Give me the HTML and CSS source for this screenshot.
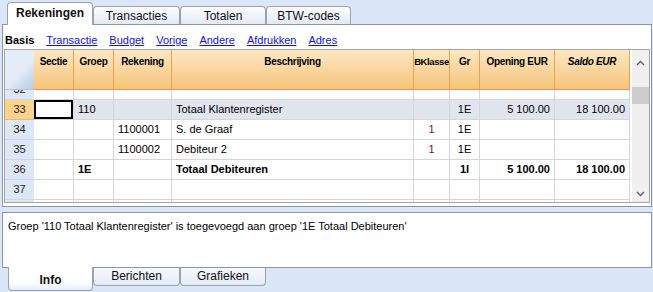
FILE: index.html
```html
<!doctype html>
<html lang="nl">

<head>
    <meta charset="utf-8" />
    <title>Rekeningen</title>
    <link rel="stylesheet" href="styles.css">
</head>

<body>
    <div class="top-tabs">
        <div class="tab active w86">Rekeningen</div>
        <div class="tab w87">Transacties</div>
        <div class="tab w86">Totalen</div>
        <div class="tab w85">BTW-codes</div>
    </div>

    <div class="main">
        <div class="links">
            <strong>Basis</strong>
            <a href="#">Transactie</a>
            <a href="#">Budget</a>
            <a href="#">Vorige</a>
            <a href="#">Andere</a>
            <a href="#">Afdrukken</a>
            <a href="#">Adres</a>
        </div>

        <div class="grid">
            <div class="sheet">
                <div class="row head">
                    <div class="cell num corner"></div>
                    <div class="cell">Sectie</div>
                    <div class="cell">Groep</div>
                    <div class="cell">Rekening</div>
                    <div class="cell">Beschrijving</div>
                    <div class="cell tight">BKlasse</div>
                    <div class="cell">Gr</div>
                    <div class="cell">Opening EUR</div>
                    <div class="cell italic">Saldo EUR</div>
                </div>

                <div class="body">
                    <div class="rows">
                        <div class="row">
                            <div class="cell num">32</div>
                            <div class="cell"></div><div class="cell"></div><div class="cell"></div><div class="cell"></div>
                            <div class="cell"></div><div class="cell"></div><div class="cell"></div><div class="cell"></div>
                        </div>
                        <div class="row current">
                            <div class="cell num">33</div>
                            <div class="cell selected"></div>
                            <div class="cell">110</div>
                            <div class="cell"></div>
                            <div class="cell">Totaal Klantenregister</div>
                            <div class="cell"></div>
                            <div class="cell mid">1E</div>
                            <div class="cell right">5 100.00</div>
                            <div class="cell right">18 100.00</div>
                        </div>
                        <div class="row">
                            <div class="cell num">34</div>
                            <div class="cell"></div>
                            <div class="cell"></div>
                            <div class="cell">1100001</div>
                            <div class="cell">S. de Graaf</div>
                            <div class="cell mid klasse">1</div>
                            <div class="cell mid">1E</div>
                            <div class="cell"></div>
                            <div class="cell"></div>
                        </div>
                        <div class="row">
                            <div class="cell num">35</div>
                            <div class="cell"></div>
                            <div class="cell"></div>
                            <div class="cell">1100002</div>
                            <div class="cell">Debiteur 2</div>
                            <div class="cell mid klasse">1</div>
                            <div class="cell mid">1E</div>
                            <div class="cell"></div>
                            <div class="cell"></div>
                        </div>
                        <div class="row total">
                            <div class="cell num">36</div>
                            <div class="cell"></div>
                            <div class="cell">1E</div>
                            <div class="cell"></div>
                            <div class="cell">Totaal Debiteuren</div>
                            <div class="cell"></div>
                            <div class="cell mid">1I</div>
                            <div class="cell right">5 100.00</div>
                            <div class="cell right">18 100.00</div>
                        </div>
                        <div class="row">
                            <div class="cell num">37</div>
                            <div class="cell"></div><div class="cell"></div><div class="cell"></div><div class="cell"></div>
                            <div class="cell"></div><div class="cell"></div><div class="cell"></div><div class="cell"></div>
                        </div>
                        <div class="row">
                            <div class="cell num"></div>
                            <div class="cell"></div><div class="cell"></div><div class="cell"></div><div class="cell"></div>
                            <div class="cell"></div><div class="cell"></div><div class="cell"></div><div class="cell"></div>
                        </div>
                    </div>
                </div>
            </div>

            <div class="scroll">
                <div class="arrow-up">
                    <svg width="9" height="6" viewBox="0 0 9 6"><polyline points="1,5 4.5,1.5 8,5" fill="none" stroke="#606060" stroke-width="1.4" /></svg>
                </div>
                <div class="thumb"></div>
                <div class="arrow-down">
                    <svg width="9" height="6" viewBox="0 0 9 6"><polyline points="1,1 4.5,4.5 8,1" fill="none" stroke="#606060" stroke-width="1.4" /></svg>
                </div>
            </div>
        </div>
    </div>

    <div class="info">Groep '110 Totaal Klantenregister' is toegevoegd aan groep '1E Totaal Debiteuren'</div>

    <div class="bottom-tabs">
        <div class="btab active w85">Info</div>
        <div class="btab w87">Berichten</div>
        <div class="btab w86">Grafieken</div>
    </div>
</body>

</html>
```

FILE: styles.css
```css
body {
    margin: 0;
    width: 653px;
    height: 292px;
    overflow: hidden;
    background-color: #dbe6f8;
    font-family: "Liberation Sans", Arial, sans-serif;
    font-size: 11px;
    color: #000;
}

/* tabs on top */

.top-tabs {
    display: flex;
    align-items: flex-end;
    height: 24px;
    padding-left: 7px;
}

.tab {
    box-sizing: border-box;
    height: 18px;
    border: 1px solid #9ba2ad;
    border-bottom: none;
    border-radius: 4px 4px 0 0;
    background: linear-gradient(#fdfeff, #e2e9f5);
    text-align: center;
    line-height: 18px;
    font-size: 12px;
    color: #111;
}

.tab.active {
    position: relative;
    z-index: 1;
    height: 23px;
    margin-bottom: -1px;
    background: #fff;
    font-weight: bold;
    line-height: 20px;
}

.w85 { width: 85px; }
.w86 { width: 86px; }
.w87 { width: 87px; }

/* main panel */

.main {
    box-sizing: border-box;
    width: 650px;
    height: 183px;
    margin-left: 2px;
    padding: 0 1px;
    border: 1px solid #8e959f;
    background-color: #fff;
}

.links {
    box-sizing: border-box;
    display: flex;
    align-items: center;
    gap: 12px;
    height: 24px;
    padding: 6px 0 0 1px;
}

.links a {
    color: #1010f0;
}

/* grid */

.grid {
    display: flex;
    height: 154px;
    box-sizing: border-box;
    border: 1px solid #a4a4a4;
}

.sheet {
    width: 625px;
}

.row {
    display: grid;
    grid-template-columns: 29px 40px 40px 58px 242px 36px 30px 75px 75px;
    height: 20px;
}

.cell {
    box-sizing: border-box;
    overflow: hidden;
    white-space: nowrap;
    padding: 0 4px;
    line-height: 19px;
    border-right: 1px solid #d6d6d6;
    border-bottom: 1px solid #d6d6d6;
}

.cell.num {
    padding: 0;
    text-align: center;
    color: #222;
    background-color: #dde7f5;
    border-right: none;
    border-bottom-color: #cbd8ea;
}

.cell.mid { text-align: center; }
.cell.right { text-align: right; }
.cell.klasse { color: #7a0a55; }

.head {
    height: 40px;
}

.head .cell {
    padding: 5px 2px 0;
    line-height: 13px;
    text-align: center;
    font-size: 10px;
    font-weight: bold;
    letter-spacing: -0.3px;
    background: linear-gradient(#fde8c4, #f6c47a);
    border-right-color: #f0a04a;
    border-bottom-color: #f0953a;
}

.head .cell.corner {
    background: linear-gradient(135deg, #e4ecf8 55%, #b9c9e0);
    border-bottom-color: #b6c6de;
}

.head .cell.tight {
    padding: 5px 0 0;
    font-size: 9.5px;
    letter-spacing: -0.4px;
}

.head .cell.italic { font-style: italic; }

.body {
    height: 112px;
    overflow: hidden;
}

.rows {
    margin-top: -10px;
}

.current .cell {
    background-color: #e2e4ee;
}

.current .cell.num {
    background-color: #fcd28c;
    border-bottom-color: #f0b860;
}

.current .cell.selected {
    background-color: #fff;
    box-shadow: inset 0 0 0 2px #000;
}

.total .cell {
    font-weight: bold;
}

.total .cell.num {
    font-weight: normal;
}

/* scrollbar */

.scroll {
    display: flex;
    flex-direction: column;
    align-items: center;
    width: 17px;
    margin-left: 2px;
    background-color: #f0f0f0;
}

.arrow-up {
    display: flex;
    align-items: center;
    justify-content: center;
    height: 26px;
}

.thumb {
    width: 17px;
    height: 17px;
    margin-top: 11px;
    background-color: #cdcdcd;
}

.arrow-down {
    display: flex;
    align-items: center;
    justify-content: center;
    height: 16px;
    margin-top: auto;
}

/* info panel */

.info {
    box-sizing: border-box;
    width: 650px;
    height: 56px;
    margin: 5px 0 0 2px;
    padding: 6px 5px;
    border: 1px solid #8e959f;
    background-color: #fff;
    line-height: 14px;
}

.bottom-tabs {
    display: flex;
    align-items: flex-start;
    padding-left: 8px;
}

.btab {
    box-sizing: border-box;
    height: 18px;
    border: 1px solid #9ba2ad;
    border-top: none;
    border-radius: 0 0 4px 4px;
    background: linear-gradient(#f6f9fd, #e4ebf7);
    text-align: center;
    line-height: 17px;
    font-size: 12px;
    color: #111;
}

.btab.active {
    position: relative;
    height: 24px;
    margin-top: -1px;
    background: linear-gradient(#fff 65%, #e6edf8);
    font-weight: bold;
    line-height: 26px;
}
```
